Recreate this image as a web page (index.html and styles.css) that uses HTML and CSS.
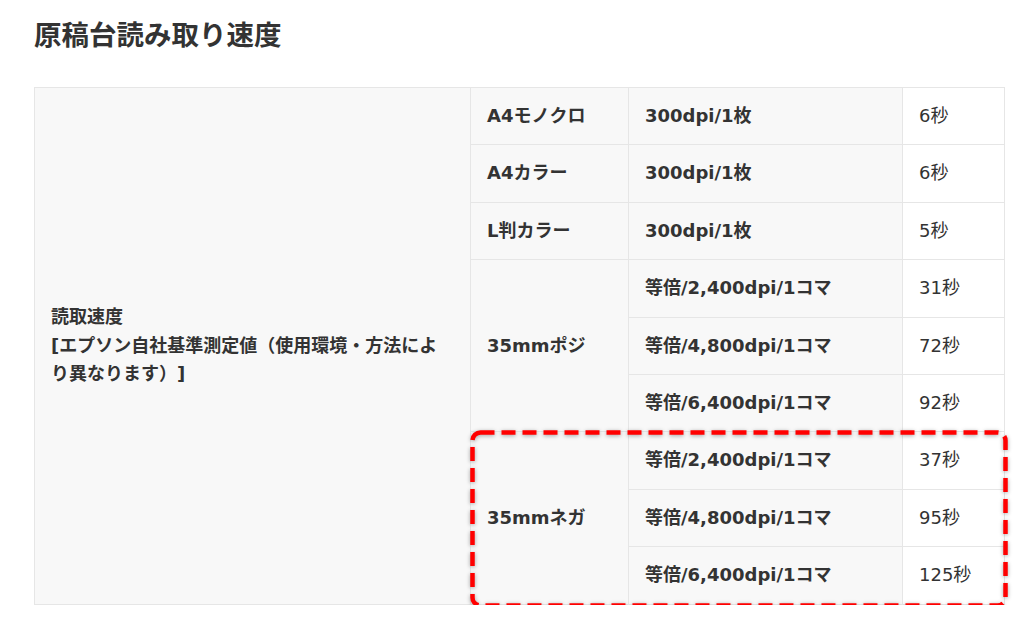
FILE: index.html
```html
<!DOCTYPE html>
<html lang="ja">
<head>
    <meta charset="UTF-8">
    <title>原稿台読み取り速度</title>
    <link rel="stylesheet" href="styles.css">
</head>
<body>
    <main class="page">
        <h2 class="title">原稿台読み取り速度</h2>

        <div class="spec-wrap">
            <table class="spec">
                <colgroup>
                    <col class="c-label">
                    <col class="c-type">
                    <col class="c-mode">
                    <col class="c-time">
                </colgroup>
                <tr>
                    <th rowspan="9">読取速度<br>[エプソン自社基準測定値（使用環境・方法により異なります）]</th>
                    <th>A4モノクロ</th>
                    <th>300dpi/1枚</th>
                    <td>6秒</td>
                </tr>
                <tr>
                    <th>A4カラー</th>
                    <th>300dpi/1枚</th>
                    <td>6秒</td>
                </tr>
                <tr>
                    <th>L判カラー</th>
                    <th>300dpi/1枚</th>
                    <td>5秒</td>
                </tr>
                <tr>
                    <th rowspan="3">35mmポジ</th>
                    <th>等倍/2,400dpi/1コマ</th>
                    <td>31秒</td>
                </tr>
                <tr>
                    <th>等倍/4,800dpi/1コマ</th>
                    <td>72秒</td>
                </tr>
                <tr>
                    <th>等倍/6,400dpi/1コマ</th>
                    <td>92秒</td>
                </tr>
                <tr>
                    <th rowspan="3">35mmネガ</th>
                    <th>等倍/2,400dpi/1コマ</th>
                    <td>37秒</td>
                </tr>
                <tr>
                    <th>等倍/4,800dpi/1コマ</th>
                    <td>95秒</td>
                </tr>
                <tr>
                    <th>等倍/6,400dpi/1コマ</th>
                    <td>125秒</td>
                </tr>
            </table>

            <!-- red dashed marker around the negative film rows -->
            <svg class="marker" width="538" height="178" viewBox="0 0 538 178">
                <rect x="2.5" y="2.5" width="533" height="173" rx="8" ry="8"
                      fill="none" stroke="#ff0000" stroke-width="4.5"
                      stroke-dasharray="14 7"/>
            </svg>
        </div>
    </main>
</body>
</html>
```

FILE: styles.css
```css
body {
    margin: 0;
    padding: 0;
    background-color: white;
    color: #333;
    font-family: "DejaVu Sans", "Noto Sans CJK JP", sans-serif;
    text-spacing-trim: space-all;
}

.page {
    padding: 16px 20px 0 34px;
}

.title {
    margin: 0 0 33px;
    font-size: 27.5px;
    line-height: 38px;
    font-weight: bold;
    color: #333;
}

.spec-wrap {
    position: relative;
    width: 970px;
}

.spec {
    width: 970px;
    table-layout: fixed;
    border-collapse: collapse;
    font-size: 18px;
    line-height: 28.4px;
}

.c-label { width: 436px; }
.c-type  { width: 158px; }
.c-mode  { width: 274px; }
.c-time  { width: 102px; }

.spec th,
.spec td {
    border: 1px solid #e6e6e6;
    padding: 14px 16px;
    text-align: left;
    vertical-align: middle;
}

.spec th {
    background-color: #f8f8f8;
    font-weight: bold;
    color: #333;
}

.spec td {
    background-color: white;
    font-weight: normal;
    color: #333;
}

.marker {
    position: absolute;
    left: 436px;
    top: 343px;
    filter: drop-shadow(0 1px 2px rgba(0, 0, 0, 0.35));
}
```
